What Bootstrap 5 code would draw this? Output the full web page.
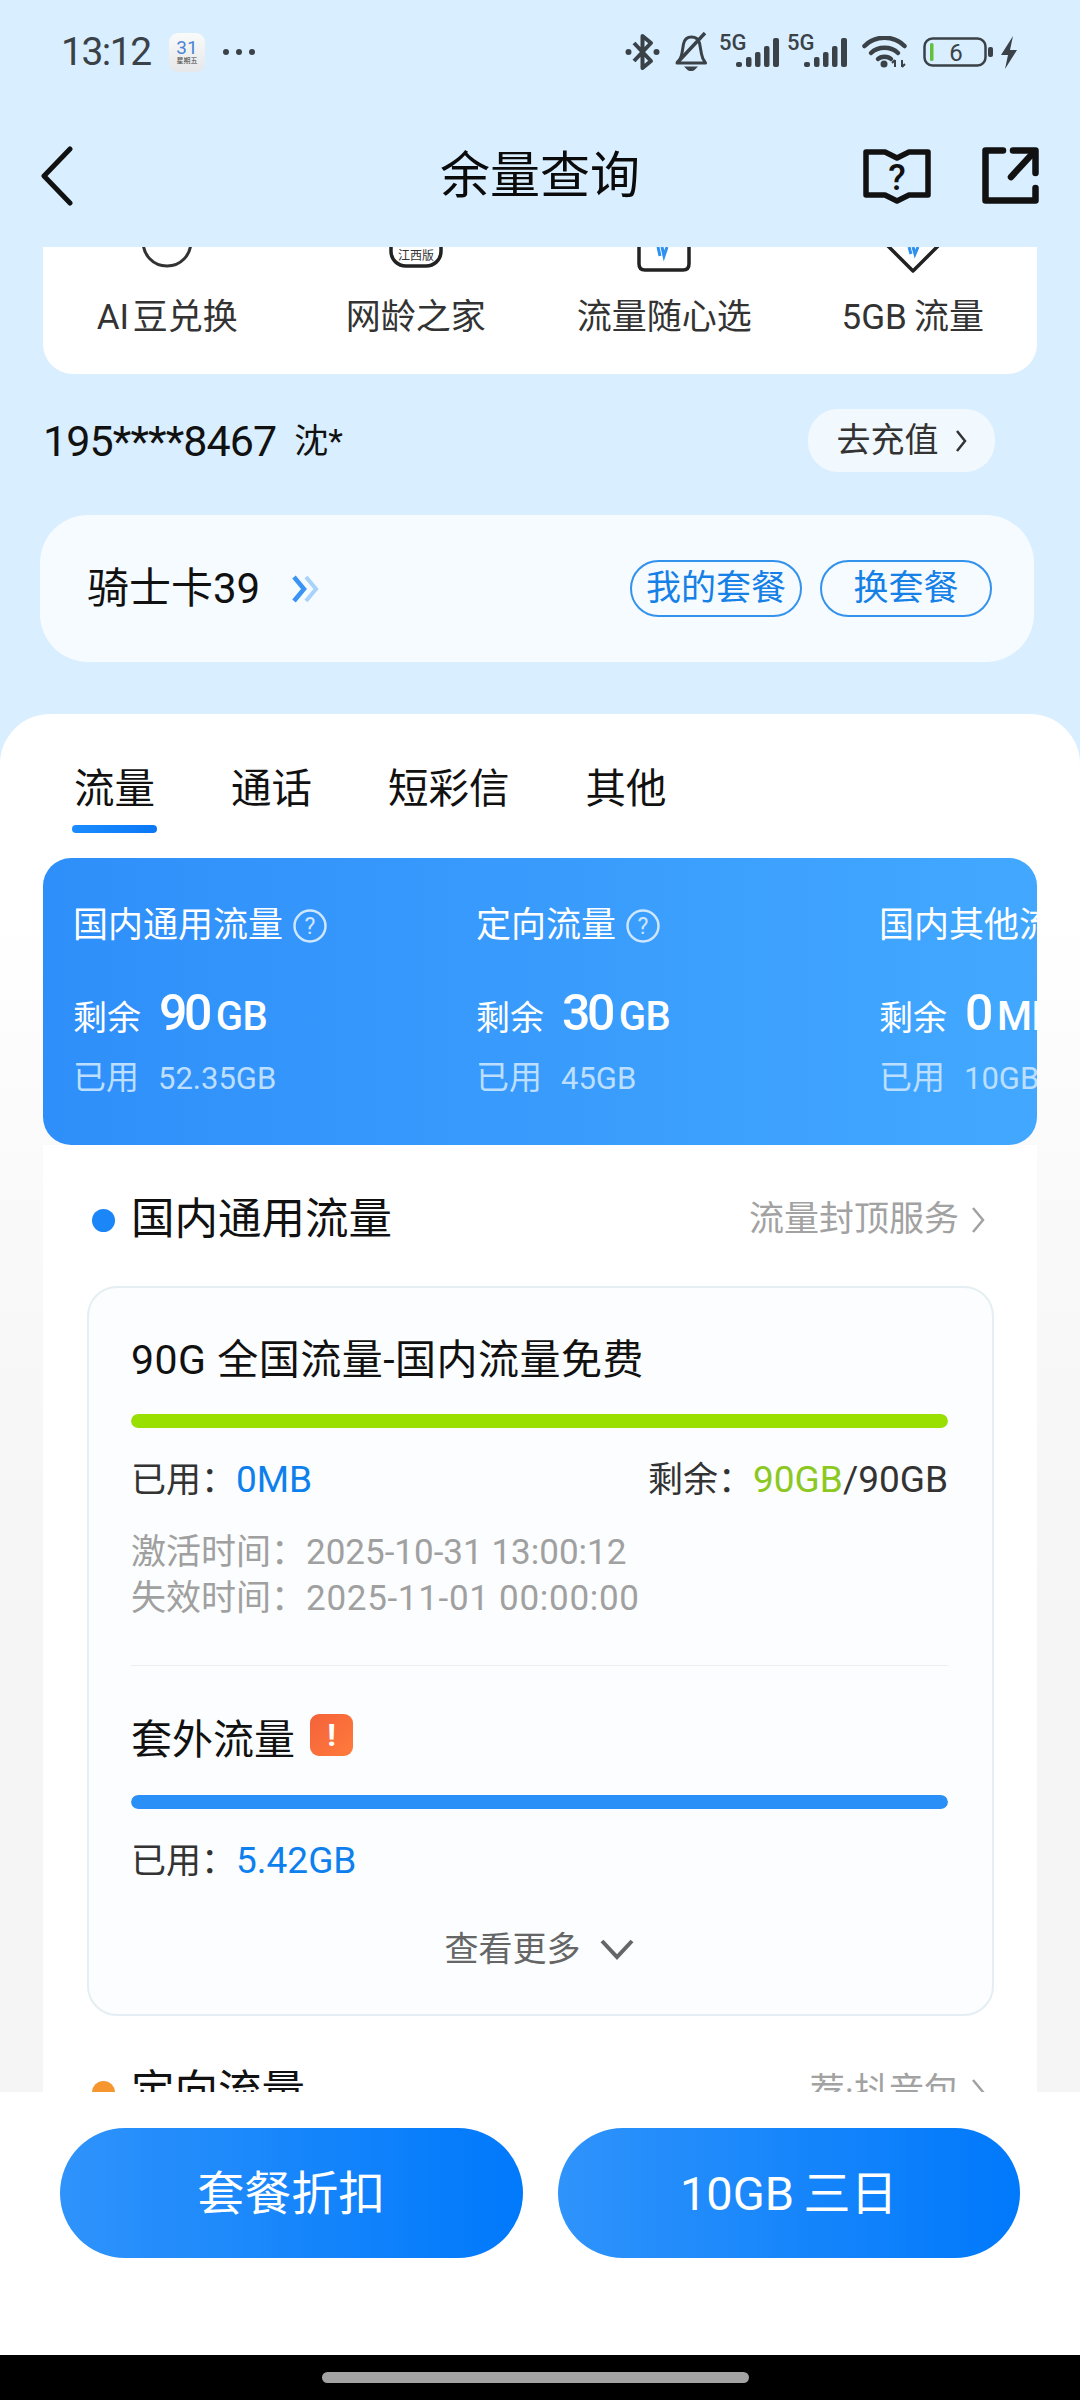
<!DOCTYPE html>
<html lang="zh-CN">
<head>
<meta charset="utf-8">
<title>余量查询</title>
<link href="https://cdn.jsdelivr.net/npm/bootstrap@5.3.0/dist/css/bootstrap.min.css" rel="stylesheet">
<style>
html,body{margin:0;height:2400px;width:1080px;overflow:hidden}
body{font-family:Roboto,"Noto Sans CJK SC",sans-serif;background:#d9eeff;color:#111;display:flex;flex-direction:column}
svg{display:block;flex:none}
.sbar{height:104px;padding:0 62px 0 61px;color:#3a4248;flex:none}
.sbar-time{font-size:39px;letter-spacing:-1.5px;width:108px;line-height:1}
.cal{width:36px;height:39px;border-radius:9px;background:linear-gradient(#fafafa,#e6e7e8);text-align:center;line-height:1;color:#4a86d8;font-size:19px;padding-top:5px}
.cal span{display:block;font-size:7px;color:#444;margin-top:1px}
.sbar-dots{margin-left:17px}
.i-bell{margin-left:15px}
.i-cell{margin-left:12px}
.i-cell2{margin-left:7px}
.i-wifi{margin-left:14px}
.i-batt{margin-left:16px}
.i-bolt{margin-left:7px}
.topnav{height:143px;padding:0 41px 0 41px;flex:none}
.topnav-side{width:176px}
.topnav-title{font-size:50px;line-height:1;color:#0b0b0b}
.shortcuts{margin:0 43px;height:127px;border-radius:0 0 30px 30px;border:0;overflow:hidden;flex:none}
.sc-label{font-size:35px;line-height:50px;margin-top:20px;color:#333;white-space:nowrap}
.phone-row{margin:35px 85px 0 43px;height:63px;flex:none}
.phone-no{font-size:43px;line-height:1;letter-spacing:-.9px;padding-top:2px}
.phone-name{font-size:34px;margin-left:18px;line-height:1}
.recharge{width:187px;height:63px;border-radius:30px;background:#f1f8fe;color:#333;font-size:34px;border:0;padding:0;gap:16px}
.plan{margin:43px 46px 0 40px;height:147px;border-radius:48px;background:#f6fbff;border:0;padding:0 42px 0 47px;flex:none}
.plan-name{font-size:42px;line-height:1;margin-right:31px}
.plan-btn{height:57px;width:172px;border-radius:29px;border:2px solid #3392ec;color:#1580e6;font-size:35px;line-height:1;padding:0;background:transparent}
.sheet{margin-top:52px;flex:1 1 0;min-height:0;overflow:hidden;border-radius:50px 50px 0 0;background:linear-gradient(#fff,#fff 200px,#fafafa 450px,#f5f5f5 900px);padding-top:45px}
.tabs-row{padding-left:74px;gap:76px}
.tab-txt{font-size:40.5px;line-height:60px;color:#111;white-space:nowrap}
.tab-line{display:block;height:8px;margin:6px -2px 0;border-radius:4px;background:linear-gradient(90deg,#1b8cff,#0a78f5)}
.sum-card{margin:25px 43px 0;height:287px;border-radius:28px;overflow:hidden;background:linear-gradient(90deg,#2f8ffa,#42a8ff);color:#fff;padding-left:30px;position:relative;z-index:1}
.sum-item{flex:0 0 403px;padding-top:47px;white-space:nowrap}
.sum-label{font-size:35px;line-height:42px;gap:10px}
.sum-left{margin-top:29px;height:60px;font-size:34px}
.sum-num{font-size:50px;font-weight:500;margin-left:18px;letter-spacing:-3.5px}
.sum-unit{font-size:40px;font-weight:500;margin-left:7px;letter-spacing:-.5px}
.sum-used{margin-top:22px;line-height:40px;font-size:33px;color:#bcdfff}
.sum-used b{font-weight:400;font-size:31px;margin-left:19px}
.col-white{margin:0 43px;background:#fff;padding:45px 52px 0 49px}
.sec-head{height:60px}
.sec-dot{width:23px;height:23px;border-radius:50%;background:#1a86f7;margin-right:16px}
.sec-dot.alt{background:#f5962f}
.sec-title{font-size:43.500px;line-height:60px;color:#111}
.sec-more{font-size:35px;color:#a2a2a2;gap:12px}
.usage{margin:36px -9px 0 -5px;border:2px solid #e4eef3;border-radius:30px;background:#fbfdfe;padding:42px 44px 40px 42px}
.u-title{font-size:41px;line-height:60px;color:#111}
.u-title.wide{letter-spacing:.5px}
.u-bar{height:14px;border-radius:7px;margin-top:24px;background:#e5e5e5}
.u-bar .progress-bar{border-radius:7px}
.b-green{background:#99df00}
.b-blue{background:#2a90f8}
.u-row{font-size:35px;line-height:50px;margin-top:27px;color:#333}
.u-lat{font-size:37px}
.c-blue{color:#0d80ee}
.c-green{color:#8cc821}
.u-dates{margin-top:24px;font-size:35px;line-height:46px;color:#a0a0a0}
.u-stretch{letter-spacing:.7px}
.u-div{height:1px;background:#eeeeee;margin-top:43px}
.u-sub{margin-top:44px;gap:15px}
.warn{width:43px;height:42px;border-radius:9px;background:linear-gradient(135deg,#f4623a,#ff7b3c);color:#fff;font-size:32px;font-weight:700;text-align:center;line-height:42px;margin-top:-10px}
.u-more{margin-top:37px;line-height:50px;font-size:34px;color:#666;gap:18px}
.sec-next{margin-top:46px}
.footer-bar{height:263px;background:#fff;padding:36px 60px 0 60px;gap:35px;flex:none}
.act-btn{flex:1 1 0;height:130px;border-radius:65px;border:0;color:#fff;font-size:47px;background:linear-gradient(90deg,#2f93fb,#0079fb);padding:3px 0 0}
.gesture{height:45px;background:#000;flex:none}
.gesture-handle{width:427px;height:11px;border-radius:6px;background:#a3a3a3;margin:17px 0 0 322px}
</style>
</head>
<body>

<div class="sbar d-flex align-items-center">
  <div class="sbar-time">13:12</div>
  <div class="cal">31<span>星期五</span></div>
  <svg class="sbar-dots" width="34" height="8" viewBox="0 0 34 8"><circle cx="4" cy="4" r="3" fill="#3a4248"/><circle cx="17" cy="4" r="3" fill="#3a4248"/><circle cx="30" cy="4" r="3" fill="#3a4248"/></svg>
  <div class="d-flex align-items-center ms-auto">
    <svg width="35" height="38" viewBox="0 0 35 38"><path d="M9 10 26 28 17.500 35V3L26 10 9 28" fill="none" stroke="#3a4248" stroke-width="4" stroke-linejoin="round"/><circle cx="3.500" cy="19" r="3" fill="#3a4248"/><circle cx="31.500" cy="19" r="3" fill="#3a4248"/></svg>
    <svg class="i-bell" width="32" height="40" viewBox="0 0 32 40"><path d="M2 31C5 28 6.500 25 7 21L8.500 12C9.500 7 13 5 16.500 5 20.500 5 23.500 7.500 24.500 11L26.500 22C27 25 28.500 28.500 30.500 31Z" fill="none" stroke="#3a4248" stroke-width="3" stroke-linejoin="round"/><path d="M2 31 30 1" stroke="#3a4248" stroke-width="3.500"/><path d="M9 34.500H23L20 37.500C18 39.500 14 39.500 12 37.500Z" fill="#3a4248"/></svg>
    <svg class="i-cell" width="61" height="46" viewBox="0 0 61 46"><text x="0" y="21" font-family="Roboto" font-size="22" font-weight="500" fill="#3a4248">5G</text><g fill="#3a4248"><rect x="17" y="33" width="6" height="5" rx="2"/><rect x="27" y="28" width="5.500" height="10" rx="2"/><rect x="36" y="23" width="5.500" height="15" rx="2"/><rect x="45" y="17" width="5.500" height="21" rx="2"/><rect x="54" y="9" width="6" height="29" rx="2"/></g></svg>
    <svg class="i-cell2" width="61" height="46" viewBox="0 0 61 46"><text x="0" y="21" font-family="Roboto" font-size="22" font-weight="500" fill="#3a4248">5G</text><g fill="#3a4248"><rect x="17" y="33" width="6" height="5" rx="2"/><rect x="27" y="28" width="5.500" height="10" rx="2"/><rect x="36" y="23" width="5.500" height="15" rx="2"/><rect x="45" y="17" width="5.500" height="21" rx="2"/><rect x="54" y="9" width="6" height="29" rx="2"/></g></svg>
    <svg class="i-wifi" width="45" height="32" viewBox="0 0 45 32"><g fill="none" stroke="#3a4248" stroke-width="4.500" stroke-linecap="round"><path d="M2.500 10C13-1 32-1 42.500 10"/><path d="M9 17C16 10 29 10 36 17"/><path d="M16 23C19 20 26 20 29 23"/></g><circle cx="22" cy="28" r="3.500" fill="#3a4248"/><path d="M33 24V31M30 27 33 24M40 24V31M40 31 43 28" stroke="#3a4248" stroke-width="2" fill="none"/></svg>
    <svg class="i-batt" width="70" height="30" viewBox="0 0 70 30"><rect x="1.500" y="1.500" width="61" height="27" rx="8" fill="none" stroke="#3a4248" stroke-width="2.500"/><rect x="7" y="6" width="3.500" height="18" rx="1.500" fill="#62c03a"/><text x="33" y="24" font-family="Roboto" font-size="24" text-anchor="middle" fill="#3a4248">6</text><rect x="65" y="10" width="5" height="10" rx="2" fill="#3a4248"/></svg>
    <svg class="i-bolt" width="18" height="33" viewBox="0 0 18 33"><path d="M13 0 1 19H8L5 33 17 14H10Z" fill="#3a4248"/></svg>
  </div>
</div>

<nav class="topnav d-flex align-items-center">
  <div class="topnav-side">
    <svg width="32" height="60" viewBox="0 0 32 60"><path d="M29 3 3 30 29 57" fill="none" stroke="#111" stroke-width="5" stroke-linecap="round" stroke-linejoin="round"/></svg>
  </div>
  <div class="topnav-title flex-grow-1 text-center">余量查询</div>
  <div class="topnav-side d-flex justify-content-between align-items-center">
    <svg width="68" height="58" viewBox="0 0 68 58"><path d="M3 5H22L34 11 46 5H65V48H46L34 54 22 48H3Z" fill="none" stroke="#111" stroke-width="5.500" stroke-linejoin="round"/><text x="34" y="43" font-family="Roboto" font-size="36" font-weight="500" text-anchor="middle" fill="#111">?</text></svg>
    <svg width="57" height="57" viewBox="0 0 57 57"><g fill="none" stroke="#111" stroke-width="6.500" stroke-linecap="round" stroke-linejoin="round"><path d="M21 3.500H3.500V53.500H53.500V41"/><path d="M29 30 52 5"/><path d="M31 3.500H53.500V26"/></g></svg>
  </div>
</nav>

<div class="card shortcuts">
  <div class="row g-0">
    <div class="col-3 text-center">
      <svg class="mx-auto" width="60" height="26" viewBox="0 0 60 26"><path d="M6-6C6 8 16 19 30 19S54 8 54-6" fill="none" stroke="#333" stroke-width="3"/></svg>
      <div class="sc-label">AI&#8202;豆兑换</div>
    </div>
    <div class="col-3 text-center">
      <svg class="mx-auto" width="60" height="26" viewBox="0 0 60 26"><path d="M5-6V4C5 13 12 19 20 19H40C48 19 55 13 55 4V-6" fill="none" stroke="#222" stroke-width="3.500"/><text x="30" y="12.500" font-family="Noto Sans CJK SC" font-size="12" text-anchor="middle" fill="#333">江西版</text></svg>
      <div class="sc-label">网龄之家</div>
    </div>
    <div class="col-3 text-center">
      <svg class="mx-auto" width="60" height="26" viewBox="0 0 60 26"><path d="M5-6V17C5 21 7 23 11 23H49C53 23 55 21 55 17V-6" fill="none" stroke="#222" stroke-width="3.500"/><path d="M24 0 26 9M33 0 30 9 28 0" fill="none" stroke="#2e90f0" stroke-width="3"/></svg>
      <div class="sc-label">流量随心选</div>
    </div>
    <div class="col-3 text-center">
      <svg class="mx-auto" width="60" height="26" viewBox="0 0 60 26"><path d="M3-3 30 24 57-3" fill="none" stroke="#222" stroke-width="3.500" stroke-linejoin="round"/><path d="M26 0 28 7M35 0 32 7 30 0" fill="none" stroke="#2e90f0" stroke-width="3"/></svg>
      <div class="sc-label">5GB&thinsp;流量</div>
    </div>
  </div>
</div>

<div class="phone-row d-flex align-items-center justify-content-between">
  <div class="d-flex align-items-center">
    <span class="phone-no">195****8467</span><span class="phone-name">沈*</span>
  </div>
  <button class="btn recharge d-flex align-items-center justify-content-center">去充值
    <svg width="12" height="24" viewBox="0 0 12 24"><path d="M2 2 10 12 2 22" fill="none" stroke="#333" stroke-width="2.500"/></svg>
  </button>
</div>

<div class="card plan d-flex flex-row align-items-center">
  <span class="plan-name">骑士卡39</span>
  <svg width="28" height="28" viewBox="0 0 28 28"><path d="M3 2 13 14 3 26" fill="none" stroke="#3a93f5" stroke-width="4.500"/><path d="M15 2 25 14 15 26" fill="none" stroke="#a8d2fb" stroke-width="4"/></svg>
  <div class="d-flex ms-auto" style="gap:18px">
    <button class="btn plan-btn">我的套餐</button>
    <button class="btn plan-btn">换套餐</button>
  </div>
</div>

<div class="sheet">
  <div class="tabs-row d-flex">
    <div><span class="tab-txt d-block">流量</span><span class="tab-line"></span></div>
    <div><span class="tab-txt d-block">通话</span></div>
    <div><span class="tab-txt d-block">短彩信</span></div>
    <div><span class="tab-txt d-block">其他</span></div>
  </div>

  <div class="sum-card d-flex">
    <div class="sum-item">
      <div class="sum-label d-flex align-items-center">国内通用流量
        <svg width="34" height="34" viewBox="0 0 34 34"><circle cx="17" cy="17" r="15.500" fill="none" stroke="#cfe6ff" stroke-width="2.500"/><text x="17" y="25" font-family="Roboto" font-size="23" text-anchor="middle" fill="#cfe6ff">?</text></svg>
      </div>
      <div class="sum-left d-flex align-items-baseline">剩余<span class="sum-num">90</span><span class="sum-unit">GB</span></div>
      <div class="sum-used">已用<b>52.35GB</b></div>
    </div>
    <div class="sum-item">
      <div class="sum-label d-flex align-items-center">定向流量
        <svg width="34" height="34" viewBox="0 0 34 34"><circle cx="17" cy="17" r="15.500" fill="none" stroke="#cfe6ff" stroke-width="2.500"/><text x="17" y="25" font-family="Roboto" font-size="23" text-anchor="middle" fill="#cfe6ff">?</text></svg>
      </div>
      <div class="sum-left d-flex align-items-baseline">剩余<span class="sum-num">30</span><span class="sum-unit">GB</span></div>
      <div class="sum-used">已用<b>45GB</b></div>
    </div>
    <div class="sum-item">
      <div class="sum-label d-flex align-items-center">国内其他流量</div>
      <div class="sum-left d-flex align-items-baseline">剩余<span class="sum-num">0</span><span class="sum-unit">MB</span></div>
      <div class="sum-used">已用<b>10GB</b></div>
    </div>
  </div>

  <div class="col-white">
    <div class="sec-head d-flex align-items-center">
      <span class="sec-dot"></span><span class="sec-title">国内通用流量</span>
      <span class="sec-more d-flex align-items-center ms-auto">流量封顶服务
        <svg width="14" height="28" viewBox="0 0 14 28"><path d="M2 2 12 14 2 26" fill="none" stroke="#a2a2a2" stroke-width="2.500"/></svg>
      </span>
    </div>

    <div class="usage">
      <div class="u-title wide">90G 全国流量-国内流量免费</div>
      <div class="progress u-bar"><div class="progress-bar b-green" style="width:100%"></div></div>
      <div class="u-row d-flex justify-content-between">
        <span>已用：<span class="c-blue u-lat">0MB</span></span>
        <span>剩余：<span class="c-green u-lat">90GB</span><span class="u-lat">/90GB</span></span>
      </div>
      <div class="u-dates">
        <div>激活时间：2025-10-31 13:00:12</div>
        <div>失效时间：<span class="u-stretch">2025-11-01 00:00:00</span></div>
      </div>
      <div class="u-div"></div>
      <div class="u-sub d-flex align-items-center">
        <span class="u-title">套外流量</span><span class="warn">!</span>
      </div>
      <div class="progress u-bar" style="margin-top:25px"><div class="progress-bar b-blue" style="width:100%"></div></div>
      <div class="u-row">已用：<span class="c-blue u-lat">5.42GB</span></div>
      <div class="u-more d-flex align-items-center justify-content-center">查看更多
        <svg width="36" height="22" viewBox="0 0 36 22"><path d="M3 3 18 19 33 3" fill="none" stroke="#666" stroke-width="4"/></svg>
      </div>
    </div>

    <div class="sec-head sec-next d-flex align-items-center">
      <span class="sec-dot alt"></span><span class="sec-title">定向流量</span>
      <span class="sec-more d-flex align-items-center ms-auto">荐·抖音包
        <svg width="14" height="28" viewBox="0 0 14 28"><path d="M2 2 12 14 2 26" fill="none" stroke="#a2a2a2" stroke-width="2.500"/></svg>
      </span>
    </div>
  </div>
</div>

<div class="footer-bar d-flex">
  <button class="btn act-btn">套餐折扣</button>
  <button class="btn act-btn">10GB&thinsp;三日</button>
</div>
<div class="gesture"><div class="gesture-handle"></div></div>

</body>
</html>
